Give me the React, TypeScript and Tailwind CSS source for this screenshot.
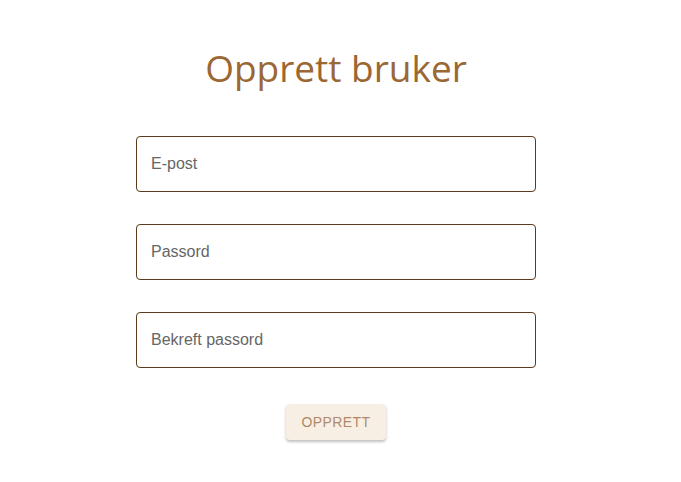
export default function App() {
  return (
    <div className="min-h-[482px] w-full bg-white flex flex-col items-center pt-[41px] pr-[9px]">
      <h1
        className="text-[37px] leading-[54px] text-[#9b6733] mb-[41px]"
        style={{ fontFamily: '"Open Sans", "Noto Sans", sans-serif' }}
      >
        Opprett bruker
      </h1>
      <form className="flex flex-col items-center gap-[32px]" style={{ fontFamily: '"Liberation Sans", Arial, sans-serif' }}>
        <input
          type="email"
          placeholder="E-post"
          className="w-[400px] h-[56px] px-[14px] text-[16px] border border-[#5c3a1a] rounded-[4px] outline-none placeholder:text-[#666666]"
        />
        <input
          type="password"
          placeholder="Passord"
          className="w-[400px] h-[56px] px-[14px] text-[16px] border border-[#5c3a1a] rounded-[4px] outline-none placeholder:text-[#666666]"
        />
        <input
          type="password"
          placeholder="Bekreft passord"
          className="w-[400px] h-[56px] px-[14px] text-[16px] border border-[#5c3a1a] rounded-[4px] outline-none placeholder:text-[#666666]"
        />
        <button
          type="button"
          className="w-[100px] h-[36px] mt-[4px] rounded-[4px] bg-[#f8efe4] text-[#b08968] text-[14px] tracking-[0.4px] uppercase shadow-[0_2px_3px_rgba(0,0,0,0.25)]"
        >
          Opprett
        </button>
      </form>
    </div>
  );
}
